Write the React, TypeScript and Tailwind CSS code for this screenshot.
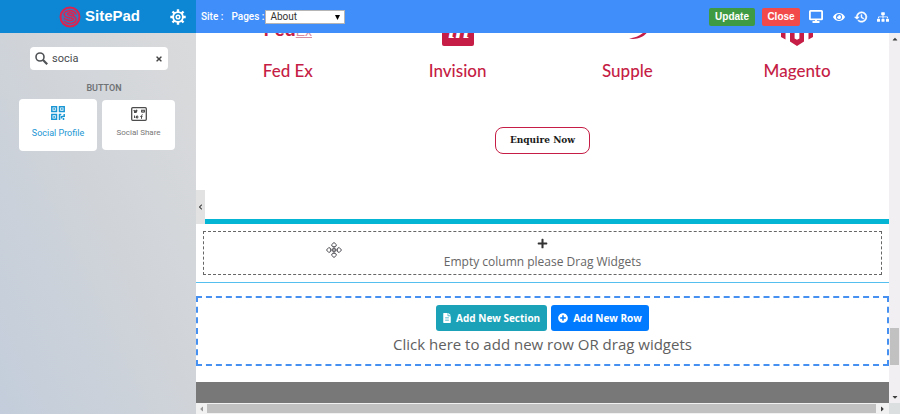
import React, { useState } from 'react';
import {
  FaCaretDown,
  FaCaretLeft,
  FaCaretRight,
  FaCaretUp,
  FaChevronLeft,
  FaEye,
  FaFileAlt,
  FaPlus,
  FaPlusCircle,
  FaSitemap,
  FaTimes,
} from 'react-icons/fa';

interface Client {
  name: string;
  logo: React.ReactNode;
}

const SitePadLogo = () => (
  <svg viewBox="0 0 22 22" className="w-[22px] h-[22px]" fill="none" stroke="#dc2350" strokeLinecap="round" aria-hidden="true">
    <circle cx="11" cy="11" r="10" fill="#3f74b8" stroke="none" />
    <circle cx="11" cy="11" r="9.500" strokeWidth="2" />
    <path d="M17 8C15.500 4.600 9 3.600 6.300 6C4.200 8.300 5.400 10.700 8.200 11.300L13 12.200C15 12.700 14.600 14 12.800 14.300C10.200 14.700 7.500 14.300 5.200 12.500" strokeWidth="1.500" />
    <path d="M14.800 8.600C13 7 10.500 6.500 9 7.300C7.800 8.200 8.500 8.800 10 9.100L14 9.900C17.600 10.800 17.800 15 15 16.500C11.800 18 8 17.600 5.500 15.500" strokeWidth="1.500" />
  </svg>
);

const GearIcon = () => (
  <svg viewBox="0 0 16 16" className="w-4 h-4" fill="none" stroke="white" aria-hidden="true">
    <circle cx="8" cy="8" r="4.900" strokeWidth="1.900" />
    <circle cx="8" cy="8" r="1.800" strokeWidth="1.500" />
    <path d="M8 0.300V3M8 13v2.700M0.300 8H3M13 8h2.700M2.500 2.500l2 2M11.500 11.500l2 2M2.500 13.500l2-2M11.500 4.500l2-2" strokeWidth="2.400" />
  </svg>
);

const SearchIcon = () => (
  <svg viewBox="0 0 13 13" className="w-[13px] h-[13px] shrink-0" fill="none" stroke="#505356" aria-hidden="true">
    <circle cx="5" cy="5" r="4" strokeWidth="1.600" />
    <path d="M7.800 7.800L12.200 12.200" strokeWidth="2.200" />
  </svg>
);

const DesktopIcon = () => (
  <svg viewBox="0 0 14 13" className="w-[14px] h-[13px]" fill="none" stroke="white" aria-hidden="true">
    <rect x="0.900" y="0.900" width="12.200" height="8.400" rx="0.600" strokeWidth="1.800" />
    <path d="M3.500 12h7M7 9v3" strokeWidth="2" />
  </svg>
);

const HistoryIcon = () => (
  <svg viewBox="0 0 24 24" className="w-[14px] h-[14px]" fill="white" stroke="white" strokeWidth="1" aria-hidden="true">
    <path d="M13 3a9 9 0 0 0-9 9H1l4 4 4-4H6a7 7 0 1 1 2.060 4.940l-1.420 1.420A9 9 0 1 0 13 3zM12 8v5l4.280 2.540.72-1.210-3.500-2.080V8z" />
  </svg>
);

const ProfileIcon = () => (
  <svg viewBox="0 0 14 14" className="w-[14px] h-[14px]" fill="none" stroke="#1a96d4" aria-hidden="true">
    <path d="M0.800 0.800h4.700v4.700H0.800zM8.500 0.800h4.700v4.700H8.500zM0.800 8.500h4.700v4.700H0.800z" strokeWidth="1.500" />
    <path d="M2.300 3.100H4M10 3.100h1.700M2.300 10.900H4" strokeWidth="1.500" />
    <path d="M7.800 8.500h2.500M8.500 8v6M11 10.500h1.500M13.200 8v3M10.500 10v2.500M12.500 12v2" strokeWidth="1.500" />
  </svg>
);

const ShareIcon = () => (
  <svg viewBox="0 0 16 14" className="w-4 h-[14px]" fill="none" stroke="#4d4d4d" aria-hidden="true">
    <rect x="0.700" y="0.700" width="14.600" height="12.600" rx="1" strokeWidth="1.300" />
    <path d="M2.800 3.200c1 1.600 2.500 1 3-.4M3 5.200h2l1-2" strokeWidth="1.400" />
    <path d="M10.500 3.200h3v2h-3zM10.500 3.200l1.500 1.200 1.500-1.200" />
    <path d="M3.500 8.500v2.500l1-1.200M5.500 9v2h1.300V9zM11.800 7.800c-1-.2-1.300.2-1.300 1v3M9.300 9.500h2.200" />
  </svg>
);

const FedExLogo = () => (
  <span className="font-['Liberation_Sans'] text-[18px] leading-[22px] h-[27px] shrink-0 text-[#c51d45]" aria-hidden="true">
    <b>Fed</b>
    <span className="text-[14px] text-[#d98ba0] underline">Ex</span>
  </span>
);

const InvisionLogo = () => (
  <svg viewBox="0 0 32 32" className="w-8 h-8 shrink-0" aria-hidden="true">
    <rect width="32" height="32" rx="2" fill="#c51d45" />
    <text x="6" y="24" fill="white" fontFamily="Liberation Serif, serif" fontSize="26" fontWeight="bold" fontStyle="italic">in</text>
  </svg>
);

const SuppleLogo = () => (
  <svg viewBox="0 0 48 32" className="w-12 h-8 shrink-0" fill="#c51d45" aria-hidden="true">
    <path d="M26 24.500C36 23.500 44 18 46 9C48.500 19 37 27 26 24.500Z" />
  </svg>
);

const MagentoLogo = () => (
  <svg viewBox="0 0 32 36" className="w-8 h-9 shrink-0" fill="#c51d45" aria-hidden="true">
    <path d="M16 0L32 9v18l-4.500 2.600V11.500L16 5L4.500 11.500v18.100L0 27V9z" />
    <path d="M9 13l4.600-2.600V28.400l2.400 1.400 2.400-1.400V10.400L23 13v18.600L16 36l-7-4.400z" />
  </svg>
);

const MoveCursor = () => (
  <svg viewBox="0 0 16 16" className="w-4 h-4" fill="white" stroke="#4a4a50" strokeWidth="1" aria-hidden="true">
    <path d="M8 .5l2.500 2.300-1 1.900h-3l-1-1.900zM8 15.500l2.500-2.300-1-1.900h-3l-1 1.900zM.5 8l2.300-2.500 1.900 1v3l-1.900 1zM15.500 8l-2.300-2.500-1.900 1v3l1.900 1z" />
    <path d="M8 5v6M5 8h6" />
    <rect x="6.800" y="6.800" width="2.400" height="2.400" />
  </svg>
);

const CLIENTS: Client[] = [
  { name: 'Fed Ex', logo: <FedExLogo /> },
  { name: 'Invision', logo: <InvisionLogo /> },
  { name: 'Supple', logo: <SuppleLogo /> },
  { name: 'Magento', logo: <MagentoLogo /> },
];

const Sidebar = () => {
  const [query, setQuery] = useState('socia');

  return (
    <aside className="w-[196px] shrink-0 flex flex-col bg-linear-to-tr from-[#c3cddb] via-[#d0d4d9] to-[#dadbdc]">
      <header className="h-[33px] bg-[#0d87d3] flex items-center justify-between pl-[59px] pr-[10px]">
        <div className="flex items-center gap-1">
          <SitePadLogo />
          <span className="font-['Liberation_Sans'] font-bold text-[15px] text-white">SitePad</span>
        </div>
        <button aria-label="Settings">
          <GearIcon />
        </button>
      </header>

      <div className="mt-[14px] ml-[30px] mr-[28px] h-[23px] bg-white rounded flex items-center gap-1 px-[5px]">
        <SearchIcon />
        <input
          type="text"
          aria-label="Search widgets"
          value={query}
          onChange={(e) => setQuery(e.target.value)}
          className="flex-1 min-w-0 pt-px text-[11px] text-[#484b4e] outline-none"
        />
        <button aria-label="Clear search" onClick={() => setQuery('')}>
          <FaTimes className="w-2 h-2 text-[#444]" />
        </button>
      </div>

      <h2 className="mt-3 pl-3 text-center text-[9px] leading-3 font-semibold text-[#707376]">BUTTON</h2>

      {/* Widgets */}
      <div className="mt-[5px] pl-[19px] pr-[21px] flex items-center gap-[5px]">
        <button className="flex-1 h-[52px] bg-white rounded flex flex-col items-center pt-[7px] gap-[7px] text-[9px] leading-3 text-[#1a96d4]">
          <ProfileIcon />
          Social Profile
        </button>
        <button className="w-[73px] h-[50px] bg-white rounded flex flex-col items-center pt-[7px] gap-[6px] text-[8px] leading-3 text-[#777]">
          <ShareIcon />
          Social Share
        </button>
      </div>
    </aside>
  );
};

const TopBar = () => (
  <header className="h-[33px] bg-[#3f8ef9] flex items-center text-white text-[10px] pl-[5px] pr-[11px]">
    <span className="font-medium">Site :</span>
    <label htmlFor="page" className="font-medium ml-2 mr-px">Pages :</label>
    <div className="relative">
      <select id="page" className="appearance-none block w-20 h-[14px] bg-white border border-[#b5b5b5] text-[#333] text-[10px] leading-3 pl-1">
        <option>About</option>
        <option>Home</option>
      </select>
      <svg viewBox="0 0 5 5" className="absolute right-[5px] top-[5px] w-[5px] h-[5px] pointer-events-none" aria-hidden="true">
        <path d="M0 0h5L2.500 5z" />
      </svg>
    </div>
    <div className="ml-auto flex items-center font-['Liberation_Sans']">
      <button className="w-[46px] h-[18px] rounded-xs bg-[#3f9b43] font-bold text-[10px]">Update</button>
      <button className="w-[38px] h-[18px] rounded-xs bg-[#f24a4a] font-bold text-[10px] ml-[7px]">Close</button>
      <button aria-label="Desktop view" className="ml-[9px]"><DesktopIcon /></button>
      <button aria-label="Preview" className="ml-[10px]"><FaEye className="w-3 h-3" /></button>
      <button aria-label="History" className="ml-[9px]"><HistoryIcon /></button>
      <button aria-label="Site structure" className="ml-[9px]"><FaSitemap className="w-3 h-3" /></button>
    </div>
  </header>
);

const Canvas = () => (
  <main className="flex-1 min-w-0 bg-white flex flex-col font-['Open_Sans']">
    <section className="px-[7px]">
      <div className="grid grid-cols-4">
        {CLIENTS.map(client => (
          <div key={client.name} className="flex flex-col items-center">
            <div className="h-[13px] overflow-hidden flex flex-col items-center justify-end">{client.logo}</div>
            <h3 className="mt-[13px] text-[17px] leading-6 font-medium text-[#c51d45] font-['Lato']">{client.name}</h3>
          </div>
        ))}
      </div>
      <div className="mt-11 flex justify-center">
        <button className="w-[95px] h-[27px] border-[1.5px] border-[#c51d45] rounded-lg font-['DejaVu_Serif'] font-bold text-[9px] text-[#1a1a1a]">
          Enquire Now
        </button>
      </div>
    </section>

    <section className="mt-[65px] border-t-[5px] border-b border-t-[#04b6d3] border-b-[#55c0f0] px-[7px] pt-[7px] pb-[7px]">
      <div className="relative h-11 border border-dashed border-[#666] flex flex-col items-center pt-[6px] text-[12px] leading-[18px] text-[#666]">
        <FaPlus className="w-[11px] h-[11px] text-[#333]" />
        <p className="mt-1">Empty column please Drag Widgets</p>
        <span className="absolute left-[122px] top-[10px]"><MoveCursor /></span>
      </div>
    </section>

    <section className="mt-[13px] h-[70px] border-2 border-dashed border-[#4590f0] flex flex-col items-center pt-[7px]">
      <div className="flex gap-1 text-white text-[10px] font-bold">
        <button className="h-[26px] px-[7px] rounded-[3px] bg-[#1ba2b8] flex items-center gap-[5px]">
          <FaFileAlt className="w-2 h-[10px]" />
          Add New Section
        </button>
        <button className="h-[26px] px-[7px] rounded-[3px] bg-[#007bff] flex items-center gap-[5px]">
          <FaPlusCircle className="w-[10px] h-[10px]" />
          Add New Row
        </button>
      </div>
      <p className="mt-[3px] text-[15px] leading-5 text-[#606060]">Click here to add new row OR drag widgets</p>
    </section>

    <footer className="mt-4 flex-1 min-h-[21px] bg-[#787878]" />
  </main>
);

const App: React.FC = () => (
  <div className="min-h-screen flex font-['Roboto']">
    <Sidebar />
    <div className="flex-1 min-w-0 flex flex-col">
      <TopBar />
      <div className="flex-1 flex relative">
        <Canvas />
        <button aria-label="Collapse sidebar" className="absolute left-0 top-[157px] w-[9px] h-[34px] bg-[#e2e2e2] flex items-center justify-center">
          <FaChevronLeft className="w-[5px] h-[6px] text-[#333]" />
        </button>

        {/* Vertical scrollbar */}
        <div className="w-[11px] shrink-0 bg-[#f1eff1] flex flex-col items-center justify-between py-[2px] text-[#404040]">
          <FaCaretUp className="w-2 h-2" />
          <div className="flex-1 w-full flex flex-col justify-end pb-[28px] px-px">
            <div className="h-[37px] bg-[#c1c1c1]" />
          </div>
          <FaCaretDown className="w-2 h-2" />
        </div>
      </div>

      {/* Horizontal scrollbar */}
      <div className="h-[11px] bg-[#f1f1f1] flex items-center">
        <FaCaretLeft className="w-[11px] h-2 text-[#999]" />
        <div className="flex-1 h-[9px] bg-[#c1c1c1]" />
        <FaCaretRight className="w-[13px] h-2 text-[#404040]" />
        <div className="w-[11px] h-full bg-[#dcdfe0]" />
      </div>
    </div>
  </div>
);

export default App;
